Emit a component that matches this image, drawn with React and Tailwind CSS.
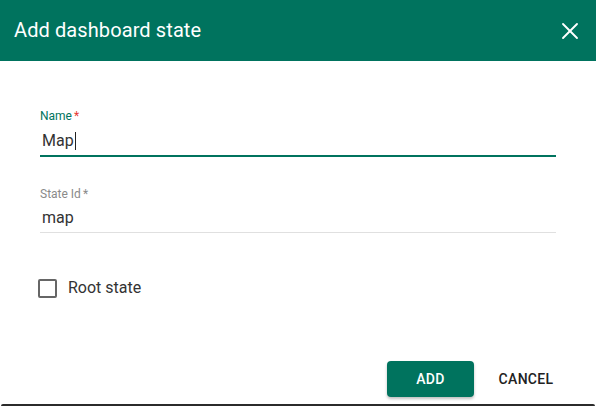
import { X } from 'lucide-react';

const App = () => {
  return (
    <div className="w-[596px] h-[406px] bg-white flex flex-col font-['Roboto',sans-serif] overflow-hidden">
      <header className="h-[61px] shrink-0 bg-[#00735e] flex items-center justify-between pl-[14px] pr-[12px]">
        <h2 className="text-[20px] text-white font-normal tracking-[0.1px] pb-[2px]">Add dashboard state</h2>
        <X size={28} strokeWidth={1.6} className="text-white" />
      </header>

      <main className="flex-1 px-[40px] pt-[48px]">
        <div className="w-[516px]">
          <label className="block text-[12px] leading-[14px] text-[#00735e]">
            Name<span className="text-[#e53935] ml-[2px]">*</span>
          </label>
          <div className="h-[32px] flex items-center text-[16px] text-[#333] pt-[4px] pl-[2px]">
            Map<span className="inline-block w-px h-[18px] bg-[#222] ml-px" />
          </div>
          <div className="h-[2px] bg-[#00735e]" />

          <label className="block mt-[30px] text-[12px] leading-[14px] text-[#8a8a8a]">
            State Id<span className="ml-[2px]">*</span>
          </label>
          <div className="h-[31px] flex items-center text-[16px] text-[#333] pt-[3px] pl-[2px]">map</div>
          <div className="h-px bg-[#e0e0e0]" />
        </div>

        <label className="mt-[43px] flex items-center gap-[11px] -ml-[2px]">
          <span className="w-[19px] h-[19px] border-2 border-[#666] rounded-[2px]" />
          <span className="text-[16px] text-[#333]">Root state</span>
        </label>
      </main>

      <footer className="flex items-center justify-end gap-[8px] pr-[26px] pb-[7px]">
        <button className="w-[87px] h-[36px] bg-[#00735e] text-white text-[14px] font-medium rounded-[4px] shadow-[0_2px_3px_rgba(0,0,0,0.25)] tracking-[0.3px]">
          ADD
        </button>
        <button className="w-[88px] h-[36px] text-[#222] text-[14px] font-medium tracking-[0.3px]">
          CANCEL
        </button>
      </footer>
      <div className="h-[2px] mx-px bg-[#2b2b2b] rounded-t-[2px]" />
    </div>
  );
};

export default App;
